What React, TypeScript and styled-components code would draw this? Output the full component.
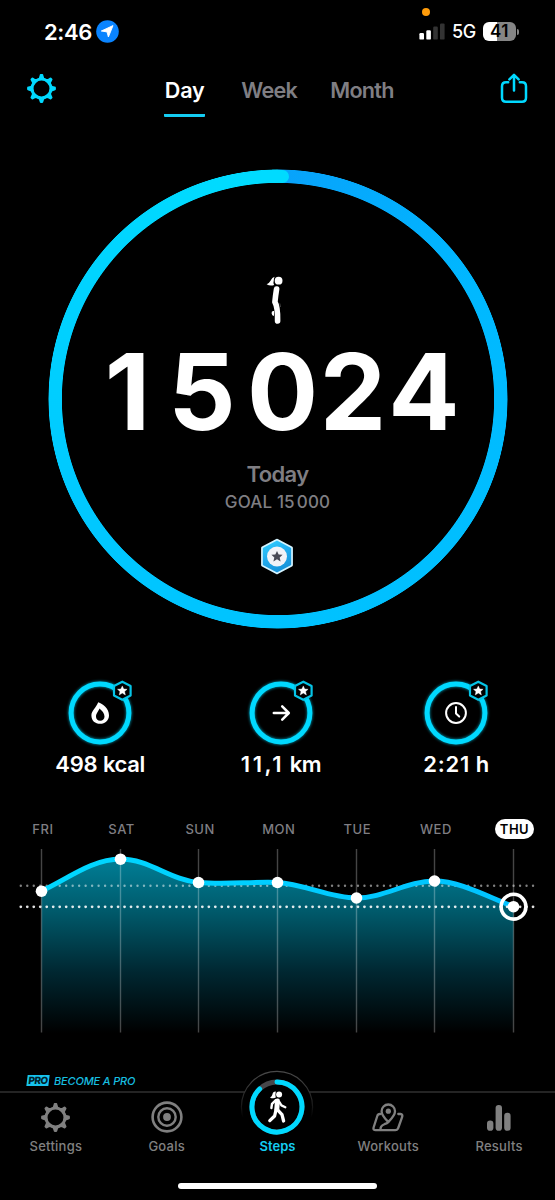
import React from 'react';
import styled, { createGlobalStyle } from 'styled-components';

const CYAN = '#00d9ff';
const GREY = '#7f7e83';

const GlobalStyle = createGlobalStyle`
  * { box-sizing: border-box; }
  body { margin: 0; background: #000; }
`;

const Screen = styled.main`
  width: 555px;
  height: 1200px;
  display: flex;
  flex-direction: column;
  background: #000;
  color: #fff;
  font-family: Inter, "Liberation Sans", sans-serif;
  overflow: hidden;
  svg { display: block; flex: none; }
`;

const StatusBar = styled.header`
  position: relative;
  height: 60px;
  display: flex;
  align-items: center;
  justify-content: space-between;
  padding: 3px 36px 0 44px;
`;

const StatusGroup = styled.div<{ $gap: number }>`
  display: flex;
  align-items: center;
  gap: ${(p) => p.$gap}px;
`;

const Clock = styled.span`
  width: 47.5px;
  font-size: 22px;
  font-weight: 600;
  letter-spacing: -0.4px;
  white-space: nowrap;
`;

const Network = styled.span`
  font-size: 18px;
  font-weight: 500;
  letter-spacing: -0.4px;
  width: 24px;
  white-space: nowrap;
`;

const MicDot = styled.i`
  position: absolute;
  left: 422px;
  top: 8px;
  width: 8px;
  height: 8px;
  border-radius: 50%;
  background: #ff9c0a;
`;

const Battery = styled.div`
  display: flex;
  align-items: center;
  gap: 1px;
`;

const BatteryBody = styled.div`
  width: 33px;
  height: 19px;
  border-radius: 6px;
  background: linear-gradient(90deg, #fff 42%, #858585 42%);
  color: #000;
  font-size: 17px;
  font-weight: 600;
  letter-spacing: 0.4px;
  line-height: 19px;
  text-align: center;
`;

const BatteryTip = styled.i`
  width: 2px;
  height: 6px;
  border-radius: 0 2px 2px 0;
  background: #858585;
`;

const Toolbar = styled.nav`
  height: 70px;
  display: flex;
  justify-content: space-between;
  padding: 13px 27px 0 26px;
`;

const Periods = styled.div`
  display: flex;
  gap: 32.5px;
  margin-left: 1px;
`;

const Period = styled.span<{ $active?: boolean }>`
  height: 44px;
  padding-top: 3px;
  padding-left: 0.5px;
  margin-right: ${(p) => (p.$active ? 3.5 : 0)}px;
  border-bottom: 3px solid ${(p) => (p.$active ? '#14cdf2' : 'transparent')};
  border-radius: 1px;
  color: ${(p) => (p.$active ? '#fff' : GREY)};
  font-size: 21.6px;
  font-weight: 600;
  letter-spacing: ${(p) => (p.$active ? -0.1 : -0.7)}px;
  line-height: 28px;
`;

const GoalSection = styled.section`
  height: 538px;
  display: flex;
  justify-content: center;
  padding-top: 39.5px;
`;

const GoalRing = styled.div`
  position: relative;
  width: 459px;
  height: 459px;
  display: flex;
  flex-direction: column;
  align-items: center;
  &::before {
    content: '';
    position: absolute;
    inset: -0.5px;
    border-radius: 50%;
    background: conic-gradient(#08a2fb 0deg, #00b8ff 60deg, #00c0ff 150deg, #00c8ff 240deg, #00dbff 345deg, #00dbff 360deg);
    mask: radial-gradient(circle, transparent 215.7px, #000 216.5px, #000 229.1px, transparent 229.9px);
  }
  &::after {
    content: '';
    position: absolute;
    left: 224px;
    top: 0.2px;
    width: 17px;
    height: 13px;
    border-radius: 0 6.5px 6.5px 0;
    background: #00dbff;
    transform: rotate(1.4deg);
  }
`;

const WalkerSlot = styled.div`
  margin: 105.5px 6px 0 0;
  height: 51px;
`;

const StepCount = styled.div`
  display: flex;
  gap: 9.5px;
  height: 130px;
  align-items: center;
  font-size: 105.5px;
  font-weight: 700;
`;

const DigitGroup = styled.span`
  display: flex;
`;

const Digit = styled.span<{ $narrow?: boolean }>`
  width: 70.7px;
  padding-right: ${(p) => (p.$narrow ? 8 : 0)}px;
  text-align: center;
`;

const Today = styled.div`
  margin-top: 3.5px;
  color: ${GREY};
  font-size: 22px;
  font-weight: 600;
  letter-spacing: -0.6px;
  line-height: 28px;
`;

const GoalText = styled.div`
  margin-top: 1px;
  display: flex;
  gap: 2px;
  color: ${GREY};
  font-size: 17px;
  font-weight: 500;
  letter-spacing: 0.15px;
  line-height: 26px;
  white-space: pre;
`;

const BadgeSlot = styled.div`
  margin: 23.5px 1px 0 0;
`;

const Metrics = styled.section`
  display: grid;
  grid-template-columns: 200px 162px 188px;
  height: 144px;
  padding-top: 7px;
`;

const Metric = styled.div`
  display: flex;
  flex-direction: column;
  align-items: center;
`;

const MetricValue = styled.span<{ $tracking: number }>`
  display: flex;
  gap: 5.5px;
  margin-top: 3px;
  font-size: 22px;
  font-weight: 600;
  line-height: 28px;
  white-space: nowrap;
  letter-spacing: ${(p) => p.$tracking}px;
`;

const Unit = styled.span`
  letter-spacing: -0.4px;
`;

const DayRow = styled.div`
  display: grid;
  grid-template-columns: repeat(7, 78.6px);
  justify-items: center;
  align-items: center;
  height: 34px;
  margin-left: 3.4px;
`;

const Day = styled.span<{ $active?: boolean }>`
  height: 20px;
  padding: 0 4.5px 0 5px;
  border-radius: 10px;
  background: ${(p) => (p.$active ? '#fff' : 'transparent')};
  color: ${(p) => (p.$active ? '#000' : GREY)};
  font-size: 13px;
  font-weight: ${(p) => (p.$active ? 600 : 500)};
  letter-spacing: 0.5px;
  line-height: 20px;
`;

const ChartSlot = styled.div`
  padding-top: 3px;
`;

const Promo = styled.div`
  height: 22px;
  margin-top: 21px;
  padding: 5.5px 0 0 27px;
  display: flex;
  gap: 5px;
  color: #17bfe0;
`;

const ProBadge = styled.span`
  width: 22px;
  height: 11px;
  margin-top: 0.5px;
  background: #17c3ee;
  color: #00222c;
  transform: skewX(-7deg);
  font-size: 10px;
  font-weight: 800;
  line-height: 11px;
  letter-spacing: -0.5px;
  text-align: center;
`;

const PromoText = styled.span`
  font-size: 11px;
  font-style: italic;
  font-weight: 500;
  letter-spacing: -0.18px;
  line-height: 13px;
`;

const TabBar = styled.nav`
  position: relative;
  height: 84px;
  border-top: 2px solid #242424;
  display: grid;
  grid-template-columns: repeat(5, 110.8px);
  justify-content: center;
`;

const Tab = styled.div<{ $active?: boolean }>`
  display: flex;
  flex-direction: column;
  align-items: center;
  justify-content: flex-end;
  height: 61px;
  gap: 5.5px;
  color: ${(p) => (p.$active ? '#14cdf2' : '#808080')};
  font-size: 13px;
  font-weight: ${(p) => (p.$active ? 600 : 500)};
  letter-spacing: ${(p) => (p.$active ? 0 : 0.25)}px;
  line-height: 16px;
`;

const TabIcon = styled.span<{ $raised?: boolean }>`
  height: 34px;
  display: flex;
  align-items: flex-end;
  margin-bottom: ${(p) => (p.$raised ? -11.5 : 0)}px;
`;

const HomeIndicator = styled.div`
  width: 199px;
  height: 6px;
  margin: 8px auto 0;
  border-radius: 3px;
  background: #fff;
`;

const STAR =
  'M0 -5 L1.5 -1.8 L5 -1.5 L2.4 0.9 L3.2 4.4 L0 2.5 L-3.2 4.4 L-2.4 0.9 L-5 -1.5 L-1.5 -1.8 Z';

const Gear = ({ color }: { color: string }) => (
  <svg width="31" height="31" viewBox="-15.5 -15.5 31 31" fill={color}>
    <circle r="9.4" fill="none" stroke={color} strokeWidth="2.9" />
    {[0, 45, 90, 135, 180, 225, 270, 315].map((angle) => (
      <path
        key={angle}
        transform={`rotate(${angle})`}
        d="M-4.2 -9.4 Q-2.1 -10.6 -1.9 -13.1 Q-1.8 -14.4 -0.7 -14.4 H0.7 Q1.8 -14.4 1.9 -13.1 Q2.1 -10.6 4.2 -9.4 Z"
      />
    ))}
  </svg>
);

const Share = () => (
  <svg width="28" height="31" viewBox="0 0 28 31" fill="none" stroke={CYAN} strokeWidth="2.5" strokeLinecap="round" strokeLinejoin="round">
    <path d="M8.2 9.3 H6 Q2 9.3 2 13.3 V24.7 Q2 28.7 6 28.7 H22 Q26 28.7 26 24.7 V13.3 Q26 9.3 22 9.3 H19.8" />
    <path d="M14 17.5 V2.2 M9.4 6.4 L14 1.9 L18.6 6.4" />
  </svg>
);

const StandingFigure = () => (
  <svg width="17" height="49" viewBox="0 0 17 49" fill="#fff">
    <circle cx="12.6" cy="5.7" r="3.9" />
    <path d="M8.6 1.7 Q6.2 2.3 4.5 5.8 Q3 8.8 0.6 9.2 Q4.2 11.3 8.1 9.9 Q7 7.5 7.8 5.3 Q7.8 3.4 8.6 1.7 Z" />
    <path d="M10.6 14 Q9.6 20 8.9 27 Q11.9 32 11.6 46" fill="none" stroke="#fff" strokeWidth="5.6" strokeLinecap="round" strokeLinejoin="round" />
    <path d="M8 36 Q5.4 35.6 5.6 38.2 Q5.8 40.8 8 41 Z" />
    <path d="M13.8 28.4 L14.6 32" stroke="#666" strokeWidth="0.6" />
  </svg>
);

const GoalBadge = () => (
  <svg width="34" height="37" viewBox="-17 -18.5 34 37">
    <defs>
      <linearGradient id="badge" x1="0" y1="0" x2="0.4" y2="1">
        <stop offset="0" stopColor="#30cfff" />
        <stop offset="0.5" stopColor="#22aef0" />
        <stop offset="1" stopColor="#1795dc" />
      </linearGradient>
    </defs>
    <path d="M0 -16 L14.2 -8.5 V8.5 L0 16 L-14.2 8.5 V-8.5 Z" fill="#d5f4ff" stroke="#d5f4ff" strokeWidth="3.4" strokeLinejoin="round" />
    <path d="M0 -15 L13.3 -7.9 V7.9 L0 15 L-13.3 7.9 V-7.9 Z" fill="url(#badge)" stroke="url(#badge)" strokeWidth="1.8" strokeLinejoin="round" />
    <circle r="10" fill="#f1f2f7" />
    <path d={STAR} transform="scale(1.12)" fill="#484955" />
  </svg>
);

const Flame = () => (
  <path
    fillRule="evenodd"
    fill="#fff"
    d="M-1.8 -10.8 C2.8 -9 9 -5 9 2.2 C9 7.6 5 10.8 0.2 10.8 C-4.8 10.8 -8.6 7.6 -8.6 2.4 C-8.6 -2.2 -4 -5 -1.8 -10.8 Z M-0.6 -4.4 C-1.2 -1.8 -4 0.2 -4 3.6 C-4 6.2 -2.4 7.8 0.2 7.8 C2.8 7.8 4.5 6.2 4.5 3.6 C4.5 0.2 2 -2.2 -0.6 -4.4 Z"
  />
);

const Arrow = () => (
  <path d="M-7.2 0 H7.4 M1.2 -6.6 L7.8 0 L1.2 6.6" fill="none" stroke="#fff" strokeWidth="2.5" strokeLinecap="round" strokeLinejoin="round" />
);

const ClockHands = () => (
  <g fill="none" stroke="#fff" strokeLinecap="round" strokeLinejoin="round">
    <circle r="9.9" strokeWidth="2" />
    <path d="M0 -6 V0.6 L3.2 3.6" strokeWidth="2" />
  </g>
);

const MetricRing = ({ children }: { children: React.ReactNode }) => (
  <svg width="76" height="72" viewBox="-38 -38 76 72">
    <defs>
      <filter id="glow" x="-20%" y="-20%" width="140%" height="140%">
        <feGaussianBlur stdDeviation="1.6" />
      </filter>
    </defs>
    <circle r="28.9" fill="none" stroke={CYAN} strokeWidth="5.4" opacity="0.7" filter="url(#glow)" />
    <circle r="28.9" fill="none" stroke={CYAN} strokeWidth="5" />
    {children}
    <g transform="translate(22.3 -22.3)">
      <path d="M0 -9 L8.3 -4.7 V4.7 L0 9 L-8.3 4.7 V-4.7 Z" fill="#000" stroke="#06c4e6" strokeWidth="2.2" strokeLinejoin="round" />
      <path d={STAR} transform="scale(.96)" fill="#fff" stroke="#fff" strokeWidth="0.4" />
    </g>
  </svg>
);

const CURVE =
  'M41.5 42 C66 31 92 10 120.5 10 C149 10 170 31 198.5 33.5 C226 36 250 32.5 277.5 33.5 C304 35 330 49 356.5 49 C384 49 407 32 434.5 32 C460 32 488 48 513.5 57.5';
const POINTS = [
  [41.5, 42.2],
  [120.5, 10.2],
  [198.5, 33.5],
  [277.5, 33.5],
  [356.5, 49],
  [434.5, 32],
  [513.5, 57.7],
];

const WeekChart = () => (
  <svg width="555" height="199" viewBox="0 0 555 199">
    <defs>
      <linearGradient id="area" gradientUnits="userSpaceOnUse" x1="0" y1="10" x2="0" y2="184">
        <stop offset="0" stopColor="#007e96" />
        <stop offset="0.3" stopColor="#005a6b" />
        <stop offset="0.65" stopColor="#002731" />
        <stop offset="1" stopColor="#000" />
      </linearGradient>
      <linearGradient id="line" gradientUnits="userSpaceOnUse" x1="41" y1="0" x2="514" y2="0">
        <stop offset="0" stopColor="#00d8ff" />
        <stop offset="1" stopColor="#00c2ff" />
      </linearGradient>
    </defs>
    <path d={`${CURVE} V184 H41.5 Z`} fill="url(#area)" />
    {POINTS.map(([x]) => (
      <path key={x} d={`M${x} 0 V183.5`} stroke="#fff" strokeOpacity="0.27" strokeWidth="1.4" />
    ))}
    <path d="M20.8 36.7 H533.3" stroke="#fff" strokeOpacity="0.5" strokeWidth="2.4" strokeLinecap="round" strokeDasharray="0 6.484" />
    <path d={CURVE} fill="none" stroke="url(#line)" strokeWidth="5" />
    <path d="M20.8 57.8 H533.3" stroke="#fff" strokeOpacity="0.88" strokeWidth="2.8" strokeLinecap="round" strokeDasharray="0 6.484" />
    {POINTS.map(([x, y]) => (
      <circle key={x} cx={x} cy={y} r="5.8" fill="#fff" />
    ))}
    <circle cx="513.5" cy="57.7" r="12.4" fill="none" stroke="#fff" strokeWidth="3.6" />
  </svg>
);

const Target = () => (
  <svg width="32" height="32" viewBox="-16 -16 32 32" fill="none" stroke="currentColor">
    <circle r="14.4" strokeWidth="2.6" />
    <circle r="8.7" strokeWidth="2.4" />
    <circle r="3.9" fill="currentColor" stroke="none" />
  </svg>
);

const StepsRing = () => (
  <svg width="74" height="74" viewBox="-37 -37 74 74">
    <defs>
      <linearGradient id="rim" x1="0" y1="0" x2="0" y2="1">
        <stop offset="0" stopColor="#4a4a4a" />
        <stop offset="0.4" stopColor="#242424" />
        <stop offset="0.65" stopColor="#000" />
      </linearGradient>
    </defs>
    <circle r="35.6" fill="#000" stroke="url(#rim)" strokeWidth="1.2" />
    <circle r="25" fill="none" stroke="#47474a" strokeWidth="4.8" />
    <path d="M0 -25 A25 25 0 1 1 -17.4 -18" fill="none" stroke={CYAN} strokeWidth="5" strokeLinecap="round" />
    <g fill="none" stroke="#fff" strokeLinecap="round" strokeLinejoin="round">
      <circle cx="2.1" cy="-12.6" r="3" fill="#fff" stroke="none" />
      <path d="M-1.2 -15.5 Q-4.2 -15.6 -4.6 -12.5 Q-5 -10.2 -7 -9.6 Q-4 -7.9 -1.2 -9.5 Q-1.9 -12 -1.2 -15.5 Z" fill="#fff" stroke="none" />
      <path d="M0.4 -6 L-0.2 2.2" strokeWidth="5" />
      <path d="M-1.2 -6.8 L-5 -3.2 L-5.6 1" strokeWidth="2.4" />
      <path d="M2.6 -4.8 L4.4 -1.6 L8.3 0.2" strokeWidth="2.3" />
      <path d="M0.6 2.8 L5 7.6 L6.6 14" strokeWidth="3.3" />
      <path d="M-1 3 L-2.4 9 L-7.2 13.6" strokeWidth="3.3" />
    </g>
  </svg>
);

const MapPin = () => (
  <svg width="32" height="30" viewBox="0 0 32 30" fill="none" stroke="currentColor" strokeWidth="2.3" strokeLinecap="round" strokeLinejoin="round">
    <path d="M16.3 19 C13.4 16 9.6 12.4 9.6 8.2 A6.7 6.7 0 0 1 23 8.2 C23 12.4 19.2 16 16.3 19 Z" />
    <circle cx="16.3" cy="8.2" r="2.6" fill="currentColor" stroke="none" />
    <path d="M8.4 11 H7.9 Q5.9 11 5.3 13 L1.6 24.5 Q0.9 27.2 3.7 27.2 H23.2 Q25.5 27.2 26.2 25 L30 14.4 Q31.1 11.2 28.5 11 H26.3" />
    <path d="M8.6 26.8 Q8 22.9 12.4 21.2 Q15.3 20.3 16.3 19" />
  </svg>
);

const Bars = () => (
  <svg width="24" height="29" viewBox="0 0 24 29" fill="currentColor">
    <rect x="0" y="16.6" width="6.4" height="10.2" rx="3.1" />
    <rect x="8.6" y="1" width="6.4" height="25.8" rx="3.1" />
    <rect x="17.2" y="8.8" width="6.4" height="18" rx="3.1" />
  </svg>
);

const Location = () => (
  <svg width="23" height="23" viewBox="0 0 23 23">
    <circle cx="11.5" cy="11.5" r="11.3" fill="#0a84ff" />
    <path d="M17 5.6 L12.4 17 L11 11.9 L5.3 11 Z" fill="#fff" stroke="#fff" strokeWidth="0.9" strokeLinejoin="round" />
  </svg>
);

const Signal = () => (
  <svg width="26" height="18" viewBox="0 0 26 18">
    <rect x="0.4" y="10" width="4.6" height="6.6" rx="1.2" fill="#fff" />
    <rect x="7.3" y="7.2" width="4.6" height="9.4" rx="1.2" fill="#fff" />
    <rect x="14.2" y="3.6" width="4.6" height="13" rx="1.2" fill="#333" />
    <rect x="21" y="0.4" width="4.6" height="16.2" rx="1.2" fill="#333" />
  </svg>
);

const METRICS = [
  { value: '498', unit: 'kcal', tracking: -0.2, icon: <Flame /> },
  { value: '11,1', unit: 'km', tracking: 2.6, icon: <Arrow /> },
  { value: '2:21', unit: 'h', tracking: 0.8, icon: <ClockHands /> },
];

const DAYS = ['FRI', 'SAT', 'SUN', 'MON', 'TUE', 'WED', 'THU'];

const TABS = [
  { label: 'Settings', icon: <Gear color="currentColor" /> },
  { label: 'Goals', icon: <Target /> },
  { label: 'Steps', icon: <StepsRing />, active: true },
  { label: 'Workouts', icon: <MapPin /> },
  { label: 'Results', icon: <Bars /> },
];

const STEP_GROUPS = ['15', '024'];

export default function App() {
  return (
    <Screen>
      <GlobalStyle />
      <StatusBar>
        <StatusGroup $gap={4.5}>
          <Clock>2:46</Clock>
          <Location />
        </StatusGroup>
        <StatusGroup $gap={7}>
          <Signal />
          <Network>5G</Network>
          <Battery>
            <BatteryBody>41</BatteryBody>
            <BatteryTip />
          </Battery>
        </StatusGroup>
        <MicDot />
      </StatusBar>
      <Toolbar>
        <Gear color={CYAN} />
        <Periods>
          <Period $active>Day</Period>
          <Period>Week</Period>
          <Period>Month</Period>
        </Periods>
        <Share />
      </Toolbar>
      <GoalSection>
        <GoalRing>
          <WalkerSlot>
            <StandingFigure />
          </WalkerSlot>
          <StepCount>
            {STEP_GROUPS.map((group) => (
              <DigitGroup key={group}>
                {group.split('').map((digit) => (
                  <Digit key={digit} $narrow={digit === '1'}>
                    {digit}
                  </Digit>
                ))}
              </DigitGroup>
            ))}
          </StepCount>
          <Today>Today</Today>
          <GoalText>
            <span>GOAL 15</span>
            <span>000</span>
          </GoalText>
          <BadgeSlot>
            <GoalBadge />
          </BadgeSlot>
        </GoalRing>
      </GoalSection>
      <Metrics>
        {METRICS.map((m) => (
          <Metric key={m.unit}>
            <MetricRing>{m.icon}</MetricRing>
            <MetricValue $tracking={m.tracking}>
              <span>{m.value}</span>
              <Unit>{m.unit}</Unit>
            </MetricValue>
          </Metric>
        ))}
      </Metrics>
      <DayRow>
        {DAYS.map((d) => (
          <Day key={d} $active={d === 'THU'}>
            {d}
          </Day>
        ))}
      </DayRow>
      <ChartSlot>
        <WeekChart />
      </ChartSlot>
      <Promo>
        <ProBadge>PRO</ProBadge>
        <PromoText>BECOME A PRO</PromoText>
      </Promo>
      <TabBar>
        {TABS.map((t) => (
          <Tab key={t.label} $active={t.active}>
            <TabIcon $raised={t.active}>{t.icon}</TabIcon>
            {t.label}
          </Tab>
        ))}
      </TabBar>
      <HomeIndicator />
    </Screen>
  );
}
